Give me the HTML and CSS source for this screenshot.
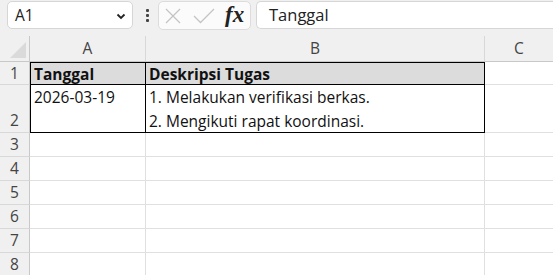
FILE: index.html
```html
<!DOCTYPE html>
<html>
<head>
<meta charset="utf-8">
<link rel="stylesheet" href="styles.css">
</head>
<body>
<div class="toolbar">
  <div class="namebox"><span class="nb-text">A1</span>
    <svg class="chev" width="10" height="7" viewBox="0 0 10 7"><path d="M1.5 1.5 L5 5 L8.5 1.5" fill="none" stroke="#222" stroke-width="1.8"/></svg>
  </div>
  <div class="dots"><span></span><span></span><span></span></div>
  <div class="fxbox">
    <svg class="ic-x" width="16" height="16" viewBox="0 0 16 16"><path d="M1 1 L15 15 M15 1 L1 15" stroke="#c4c4c4" stroke-width="1.3" fill="none"/></svg>
    <svg class="ic-ok" width="22" height="16" viewBox="0 0 22 16"><path d="M1 8 L7.5 14.5 L21 1" stroke="#c4c4c4" stroke-width="1.3" fill="none"/></svg>
    <span class="fx">fx</span>
  </div>
  <div class="formula">Tanggal</div>
</div>
<div class="sheet">
  <div class="corner"><div class="tri"></div></div>
  <div class="colh">A</div>
  <div class="colh">B</div>
  <div class="colh last">C</div>

  <div class="rowh r1">1</div>
  <div class="cell hdr a">Tanggal</div>
  <div class="cell hdr b">Deskripsi Tugas</div>
  <div class="cell c"></div>

  <div class="rowh r2">2</div>
  <div class="cell tall a">2026-03-19</div>
  <div class="cell tall b"><div class="ln">1. Melakukan verifikasi berkas.</div><div class="ln">2. Mengikuti rapat koordinasi.</div></div>
  <div class="cell c"></div>

  <div class="rowh">3</div><div class="cell"></div><div class="cell"></div><div class="cell c"></div>
  <div class="rowh">4</div><div class="cell"></div><div class="cell"></div><div class="cell c"></div>
  <div class="rowh">5</div><div class="cell"></div><div class="cell"></div><div class="cell c"></div>
  <div class="rowh">6</div><div class="cell"></div><div class="cell"></div><div class="cell c"></div>
  <div class="rowh">7</div><div class="cell"></div><div class="cell"></div><div class="cell c"></div>
  <div class="rowh">8</div><div class="cell"></div><div class="cell"></div><div class="cell c"></div>
</div>
</body>
</html>
```
FILE: styles.css
```css
html, body { margin: 0; padding: 0; background: #fff; overflow: hidden; }
body { width: 553px; height: 275px; font-family: "Open Sans", "Liberation Sans", sans-serif; }

.toolbar {
  height: 36px;
  background: #f0f0f0;
  display: flex;
  align-items: flex-start;
  padding-top: 1px;
  box-sizing: border-box;
}
.namebox {
  margin-left: 7px;
  width: 126px;
  height: 28px;
  box-sizing: border-box;
  background: #fff;
  border: 1px solid #d6d6d6;
  border-radius: 5px;
  display: flex;
  align-items: center;
  justify-content: space-between;
  padding: 0 6px 0 7px;
}
.nb-text { font-family: "Open Sans", sans-serif; font-size: 15.5px; color: #222; }
.chev { margin-top: 2px; }
.dots {
  width: 10px;
  margin-left: 9px;
  height: 28px;
  display: flex;
  flex-direction: column;
  align-items: center;
  justify-content: center;
  gap: 2px;
}
.dots span { width: 3px; height: 3px; background: #444; border-radius: 1px; }
.fxbox {
  margin-left: 6px;
  width: 93px;
  height: 29px;
  box-sizing: border-box;
  background: #fbfbfb;
  border: 1px solid #dcdcdc;
  border-radius: 5px;
  display: flex;
  align-items: center;
  padding-left: 6px;
  gap: 10px;
}
.ic-x { margin-top: 1px; }
.ic-ok { margin-top: 1px; margin-left: 2px; }
.fx {
  font-family: "Liberation Serif", serif;
  font-style: italic;
  font-weight: bold;
  font-size: 23px;
  color: #222;
  line-height: 1;
  margin-top: -3px;
}
.formula {
  margin-left: 5px;
  flex: 1;
  height: 28px;
  box-sizing: border-box;
  background: #fff;
  border: 1px solid #d6d6d6;
  border-right: none;
  border-radius: 5px 0 0 5px;
  padding-left: 12px;
  font-size: 16.5px;
  color: #222;
  line-height: 26px;
}

.sheet {
  display: grid;
  grid-template-columns: 30px 116px 339px 1fr;
  grid-template-rows: 26px 23px 48px repeat(6, 24px);
  font-family: "Open Sans", sans-serif;
}
.corner {
  background: #f0f0f0;
  border-right: 1px solid #c8c8c8;
  border-bottom: 1px solid #c8c8c8;
  position: relative;
  box-sizing: border-box;
}
.tri {
  position: absolute;
  right: 3px; bottom: 3px;
  width: 0; height: 0;
  border-left: 16px solid transparent;
  border-bottom: 16px solid #dadada;
}
.colh {
  background: #f0f0f0;
  border-right: 1px solid #d8d8d8;
  border-bottom: 1px solid #c8c8c8;
  box-sizing: border-box;
  text-align: center;
  font-size: 15.5px;
  color: #444;
  line-height: 25px;
}
.colh.last { border-right: none; }
.rowh {
  background: #f0f0f0;
  border-right: 1px solid #c8c8c8;
  border-bottom: 1px solid #d8d8d8;
  box-sizing: border-box;
  text-align: center;
  font-size: 15.5px;
  color: #444;
  line-height: 23px;
  display: flex;
  align-items: flex-end;
  justify-content: center;
}
.cell {
  border-right: 1px solid #e0e0e0;
  border-bottom: 1px solid #e0e0e0;
  box-sizing: border-box;
  font-size: 15.5px;
  color: #111;
  padding-left: 3px;
  line-height: 22px;
  white-space: nowrap;
}
.cell.c { border-right: none; }
.cell.hdr { background: #dcdcdc; font-weight: bold; border-bottom: 1px solid #000; border-top: 1px solid #000; }
.cell.a { border-left: 1px solid #000; border-right: 1px solid #000; }
.cell.b { border-right: 1px solid #000; }
.cell.tall { border-bottom: 1px solid #000; line-height: 24px; }
.sheet .rowh.r1 { line-height: 22px; }
```
